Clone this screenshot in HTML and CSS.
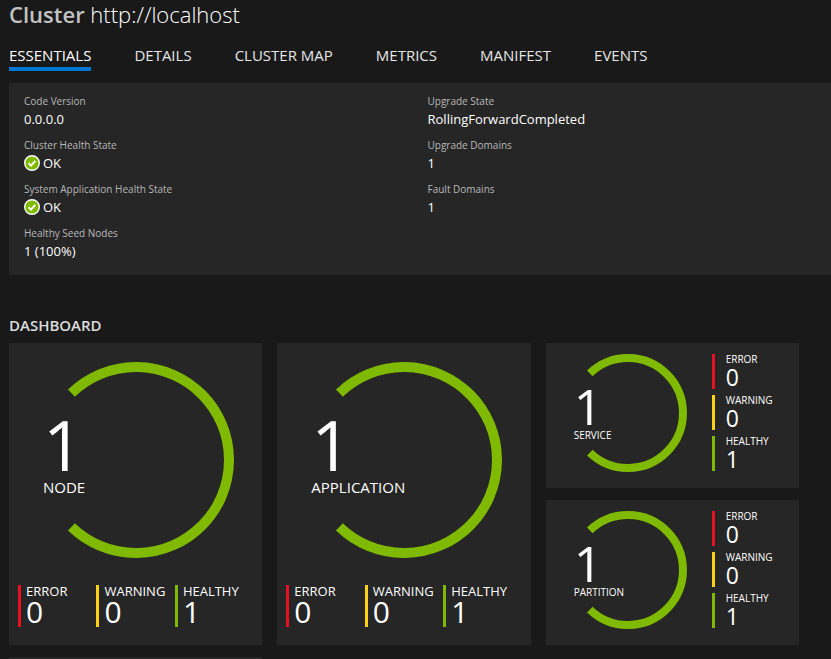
FILE: index.html
```html
<!DOCTYPE html>
<html lang="en">
<head>
<meta charset="utf-8">
<meta name="viewport" content="width=device-width, initial-scale=1">
<title>Cluster http://localhost</title>
<link rel="stylesheet" href="styles.css">
</head>
<body>
<h1 class="title"><b>Cluster</b> http://localhost</h1>
<nav class="tabs">
  <a class="tab active" href="#essentials">ESSENTIALS</a>
  <a class="tab" href="#details">DETAILS</a>
  <a class="tab" href="#map">CLUSTER MAP</a>
  <a class="tab" href="#metrics">METRICS</a>
  <a class="tab" href="#manifest">MANIFEST</a>
  <a class="tab" href="#events">EVENTS</a>
</nav>
<section class="panel" id="essentials">
  <dl class="facts">
    <div><dt>Code Version</dt><dd>0.0.0.0</dd></div>
    <div><dt>Cluster Health State</dt><dd><svg class="ok" viewBox="0 0 16 16" aria-hidden="true"><circle cx="8" cy="8" r="7.3"/><path d="M4.6 8.3 7 10.6 11.3 5.8"/></svg>OK</dd></div>
    <div><dt>System Application Health State</dt><dd><svg class="ok" viewBox="0 0 16 16" aria-hidden="true"><circle cx="8" cy="8" r="7.3"/><path d="M4.6 8.3 7 10.6 11.3 5.8"/></svg>OK</dd></div>
    <div><dt>Healthy Seed Nodes</dt><dd>1 (100%)</dd></div>
  </dl>
  <dl class="facts">
    <div><dt>Upgrade State</dt><dd>RollingForwardCompleted</dd></div>
    <div><dt>Upgrade Domains</dt><dd>1</dd></div>
    <div><dt>Fault Domains</dt><dd>1</dd></div>
  </dl>
</section>
<h2 class="heading">DASHBOARD</h2>
<main class="dashboard">
  <article class="tile large">
    <div class="chart">
      <svg class="arc" viewBox="0 0 196 196" aria-hidden="true"><path d="M33.4 31.1A93 93 0 1 1 33.4 164.9"/></svg>
      <div class="count"><strong>1</strong><span>NODE</span></div>
    </div>
    <ul class="stats">
      <li class="error"><span>ERROR</span><b>0</b></li>
      <li class="warning"><span>WARNING</span><b>0</b></li>
      <li class="healthy"><span>HEALTHY</span><b>1</b></li>
    </ul>
  </article>
  <article class="tile large">
    <div class="chart">
      <svg class="arc" viewBox="0 0 196 196" aria-hidden="true"><path d="M33.4 31.1A93 93 0 1 1 33.4 164.9"/></svg>
      <div class="count"><strong>1</strong><span>APPLICATION</span></div>
    </div>
    <ul class="stats">
      <li class="error"><span>ERROR</span><b>0</b></li>
      <li class="warning"><span>WARNING</span><b>0</b></li>
      <li class="healthy"><span>HEALTHY</span><b>1</b></li>
    </ul>
  </article>
  <div class="stack">
    <article class="tile small">
      <div class="chart">
        <svg class="arc" viewBox="0 0 118 118" aria-hidden="true"><path d="M20.8 19.4A55 55 0 1 1 20.8 98.6"/></svg>
        <div class="count"><strong>1</strong><span>SERVICE</span></div>
      </div>
      <ul class="stats">
        <li class="error"><span>ERROR</span><b>0</b></li>
        <li class="warning"><span>WARNING</span><b>0</b></li>
        <li class="healthy"><span>HEALTHY</span><b>1</b></li>
      </ul>
    </article>
    <article class="tile small">
      <div class="chart">
        <svg class="arc" viewBox="0 0 118 118" aria-hidden="true"><path d="M20.8 19.4A55 55 0 1 1 20.8 98.6"/></svg>
        <div class="count"><strong>1</strong><span>PARTITION</span></div>
      </div>
      <ul class="stats">
        <li class="error"><span>ERROR</span><b>0</b></li>
        <li class="warning"><span>WARNING</span><b>0</b></li>
        <li class="healthy"><span>HEALTHY</span><b>1</b></li>
      </ul>
    </article>
  </div>
  <div class="tile"></div>
</main>
</body>
</html>
```
FILE: styles.css
```css
* { box-sizing: border-box; }
body {
  margin: 0;
  padding-left: 9px;
  min-height: 100vh;
  display: flex;
  flex-direction: column;
  background: #191919;
  color: #fff;
  font-family: "Open Sans", "Noto Sans", sans-serif;
}
h1, h2, dl, dd, ul { margin: 0; padding: 0; }
.title { font-size: 22px; line-height: 28px; font-weight: 300; }
.title b { font-weight: 600; color: #c3c3c3; }
.tabs { display: flex; gap: 43px; margin: 16px 0 12px; }
.tab {
  color: #e6e6e6;
  text-decoration: none;
  font-size: 15px;
  line-height: 23px;
  border-bottom: 4px solid transparent;
}
.tab.active { color: #fff; border-color: #0078d4; }
.panel {
  display: grid;
  grid-template-columns: 1fr 1fr;
  padding: 10px 0 14px 15px;
  background: #262626;
}
.facts { display: flex; flex-direction: column; gap: 8px; }
.facts dt { font-size: 10px; line-height: 16px; color: #b8b8b8; }
.facts dd { display: flex; align-items: center; gap: 3px; font-size: 13px; line-height: 20px; }
.ok { width: 16px; height: 16px; }
.ok circle { fill: #7fba00; stroke: #fff; stroke-width: 1.4; }
.ok path { fill: none; stroke: #fff; stroke-width: 2; }
.heading { margin: 40px 0 8px; font-size: 15px; line-height: 20px; font-weight: 600; color: #dcdcdc; }
.dashboard {
  flex: 1;
  display: grid;
  grid-template-columns: repeat(3, minmax(0, 1fr));
  grid-template-rows: auto 1fr;
  gap: 12px 15px;
  padding-right: 32px;
}
.tile { background: #262626; }
.stack { display: grid; gap: 12px; }
.chart { display: grid; }
.arc, .count { grid-area: 1 / 1; }
.arc path { fill: none; stroke: #7fba00; }
.count { display: flex; flex-direction: column; }
.count strong { font-weight: 500; }
.stats { display: grid; list-style: none; }
.stats li { display: flex; flex-direction: column; border-left: 3px solid; }
.stats span, .stats b { color: #fff; font-weight: 400; }
.stats .error { border-color: #e81123; }
.stats .warning { border-color: #fcd116; }
.stats .healthy { border-color: #7fba00; }

.large { padding: 19px 9px 18px; }
.large .arc { width: 196px; height: 196px; justify-self: center; }
.large .arc path { stroke-width: 10; }
.large .count { padding: 50px 0 0 25px; }
.large .count strong { font-size: 70px; line-height: 64px; }
.large .count span { font-size: 15px; line-height: 22px; }
.large .stats { grid-template-columns: repeat(3, 1fr); margin-top: 27px; }
.large .stats li { padding-left: 5px; }
.large .stats span { font-size: 13px; line-height: 12px; }
.large .stats b { font-size: 30px; line-height: 30px; }

.small { display: flex; gap: 25px; padding: 11px 0 16px 23px; }
.small .arc { width: 118px; height: 118px; }
.small .arc path { stroke-width: 8; }
.small .count { padding: 30px 0 0 5px; }
.small .count strong { font-size: 50px; line-height: 44px; }
.small .count span { font-size: 10px; line-height: 14px; }
.small .stats { gap: 6px; align-content: start; }
.small .stats li { padding-left: 11px; }
.small .stats span { font-size: 10px; line-height: 11px; }
.small .stats b { font-size: 23px; line-height: 24px; }
```
